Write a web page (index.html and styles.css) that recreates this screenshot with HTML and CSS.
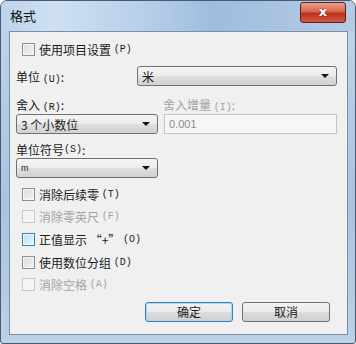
FILE: index.html
```html
<!DOCTYPE html>
<html lang="zh-CN">
<head>
  <meta charset="UTF-8">
  <title>格式</title>
  <link rel="stylesheet" href="styles.css">
</head>
<body>
  <div class="window">
    <div class="titlebar">
      <span class="title">格式</span>
      <div class="close">x</div>
    </div>

    <div class="client">
      <div class="check-row first">
        <span class="box"></span>使用项目设置 <span class="key">(P)</span>
      </div>

      <div class="unit-row">
        <span class="label">单位 <span class="key">(U)</span>:</span>
        <div class="combo wide"><span>米</span><i class="arrow"></i></div>
      </div>

      <div class="round-labels">
        <span class="col-left">舍入 <span class="key">(R)</span>:</span>
        <span class="col-right off">舍入增量 <span class="key">(I)</span>:</span>
      </div>
      <div class="round-controls">
        <div class="combo narrow"><span>3 个小数位</span><i class="arrow"></i></div>
        <div class="field">0.001</div>
      </div>

      <div class="symbol-label">单位符号 <span class="key">(S)</span>:</div>
      <div class="symbol-row">
        <div class="combo narrow"><span class="small">m</span><i class="arrow"></i></div>
      </div>

      <div class="checks">
        <div class="check-row h22"><span class="box"></span>消除后续零 <span class="key">(T)</span></div>
        <div class="check-row h23 off"><span class="box"></span>消除零英尺 <span class="key">(F)</span></div>
        <div class="check-row h23"><span class="box hot"></span>正值显示 “+” <span class="key">(O)</span></div>
        <div class="check-row h22"><span class="box"></span>使用数位分组 <span class="key">(D)</span></div>
        <div class="check-row h22 off"><span class="box"></span>消除空格 <span class="key">(A)</span></div>
      </div>

      <div class="buttons">
        <div class="btn default">确定</div>
        <div class="btn">取消</div>
      </div>
    </div>
  </div>
</body>
</html>
```

FILE: styles.css
```css
body {
  margin: 0;
  padding: 0;
  background: #fff;
  font-family: "Noto Sans CJK SC", "Noto Sans", sans-serif;
  font-size: 12px;
  color: #1a1a1a;
}

/* 窗口外框 */
.window {
  width: 354px;
  height: 342px;
  border: 1px solid #4a5a6e;
  border-radius: 7px 7px 3px 3px;
  background: linear-gradient(180deg, #c3d6ec 0%, #b3cbe6 30%, #a9c3e0 60%, #bcd0e8 100%);
  display: flex;
  flex-direction: column;
  overflow: hidden;
}
.titlebar {
  height: 30px;
  display: flex;
  align-items: flex-start;
  justify-content: space-between;
  background: linear-gradient(90deg, #bcd3ec 0%, #cfe0f2 15%, #b7cfe9 40%, #9fbcde 60%, #b5cbe5 100%);
}
.title {
  margin: 5px 0 0 9px;
  font-size: 13px;
  color: #111;
}
.close {
  width: 44px;
  height: 19px;
  margin: 1px 9px 0 0;
  border: 1px solid #5e2119;
  border-radius: 3px;
  background: linear-gradient(180deg, #e9a08e 0%, #d8654f 45%, #c0301f 55%, #cf5a42 100%);
  color: #fff;
  font-family: "DejaVu Sans", sans-serif;
  font-weight: bold;
  font-size: 13px;
  line-height: 17px;
  text-align: center;
  text-shadow: 0 0 2px #6b1a10;
}

/* 客户区 */
.client {
  margin: 0 7px 8px 8px;
  flex: 1;
  background: #f0f0f0;
  border: 1px solid #7d8fa6;
  padding: 0 10px 0 6px;
  display: flex;
  flex-direction: column;
}
.key {
  font-family: "Liberation Mono", monospace;
  font-size: 10px;
}
.off {
  color: #a3a3a3;
}

.check-row {
  display: flex;
  align-items: center;
  padding-left: 6px;
  white-space: pre;
}
.check-row.first {
  margin-top: 6px;
  height: 22px;
}
.h22 { height: 22px; }
.h23 { height: 23px; }
.box {
  width: 11px;
  height: 11px;
  border: 1px solid #8e8f8f;
  background: linear-gradient(135deg, #dcdcdc 0%, #f4f4f4 100%);
  box-shadow: inset 0 0 0 1px #f6f6f6;
  margin-right: 4px;
}
.off .box {
  border-color: #c7c7c7;
  background: #f4f4f4;
}
.box.hot {
  border-color: #3c7fb1;
  background: linear-gradient(135deg, #b9def5 0%, #e9f6fd 100%);
}

.unit-row {
  margin-top: 6px;
  height: 20px;
  display: flex;
  align-items: center;
  justify-content: space-between;
}

.combo {
  height: 18px;
  border: 1px solid #707070;
  border-radius: 3px;
  background: linear-gradient(180deg, #f4f4f4 0%, #ececec 48%, #dfdfdf 52%, #d2d2d2 100%);
  display: flex;
  align-items: center;
  justify-content: space-between;
  padding: 0 7px 0 4px;
  white-space: pre;
}
.combo.wide { width: 187px; }
.combo.narrow { width: 129px; }
.combo .small {
  font-family: "Liberation Sans", sans-serif;
  font-size: 9px;
}
.arrow {
  width: 0;
  height: 0;
  border-left: 4px solid transparent;
  border-right: 4px solid transparent;
  border-top: 4px solid #111;
}

.round-labels {
  margin-top: 10px;
  height: 16px;
  display: flex;
  align-items: center;
}
.col-left { width: 147px; }
.round-controls {
  margin-top: 2px;
  height: 20px;
  display: flex;
  gap: 6px;
}
.field {
  width: 167px;
  height: 18px;
  border: 1px solid #c4c4c4;
  background: #f6f6f6;
  color: #8a8a8a;
  font-family: "Liberation Sans", sans-serif;
  font-size: 11px;
  line-height: 18px;
  padding-left: 4px;
}

.symbol-label {
  margin-top: 7px;
  height: 16px;
  display: flex;
  align-items: center;
}
.symbol-row {
  margin-top: 1px;
  height: 20px;
  display: flex;
}

.checks {
  margin-top: 5px;
  display: flex;
  flex-direction: column;
}

.buttons {
  margin-top: 7px;
  display: flex;
  justify-content: flex-end;
  gap: 9px;
  padding-right: 7px;
}
.btn {
  width: 86px;
  height: 18px;
  border: 1px solid #707070;
  border-radius: 3px;
  background: linear-gradient(180deg, #f3f3f3 0%, #ebebeb 48%, #dddddd 52%, #cfcfcf 100%);
  text-align: center;
  line-height: 18px;
}
.btn.default {
  border-color: #3c7fb1;
  box-shadow: inset 0 0 0 1px #a6d8f5;
}
```
